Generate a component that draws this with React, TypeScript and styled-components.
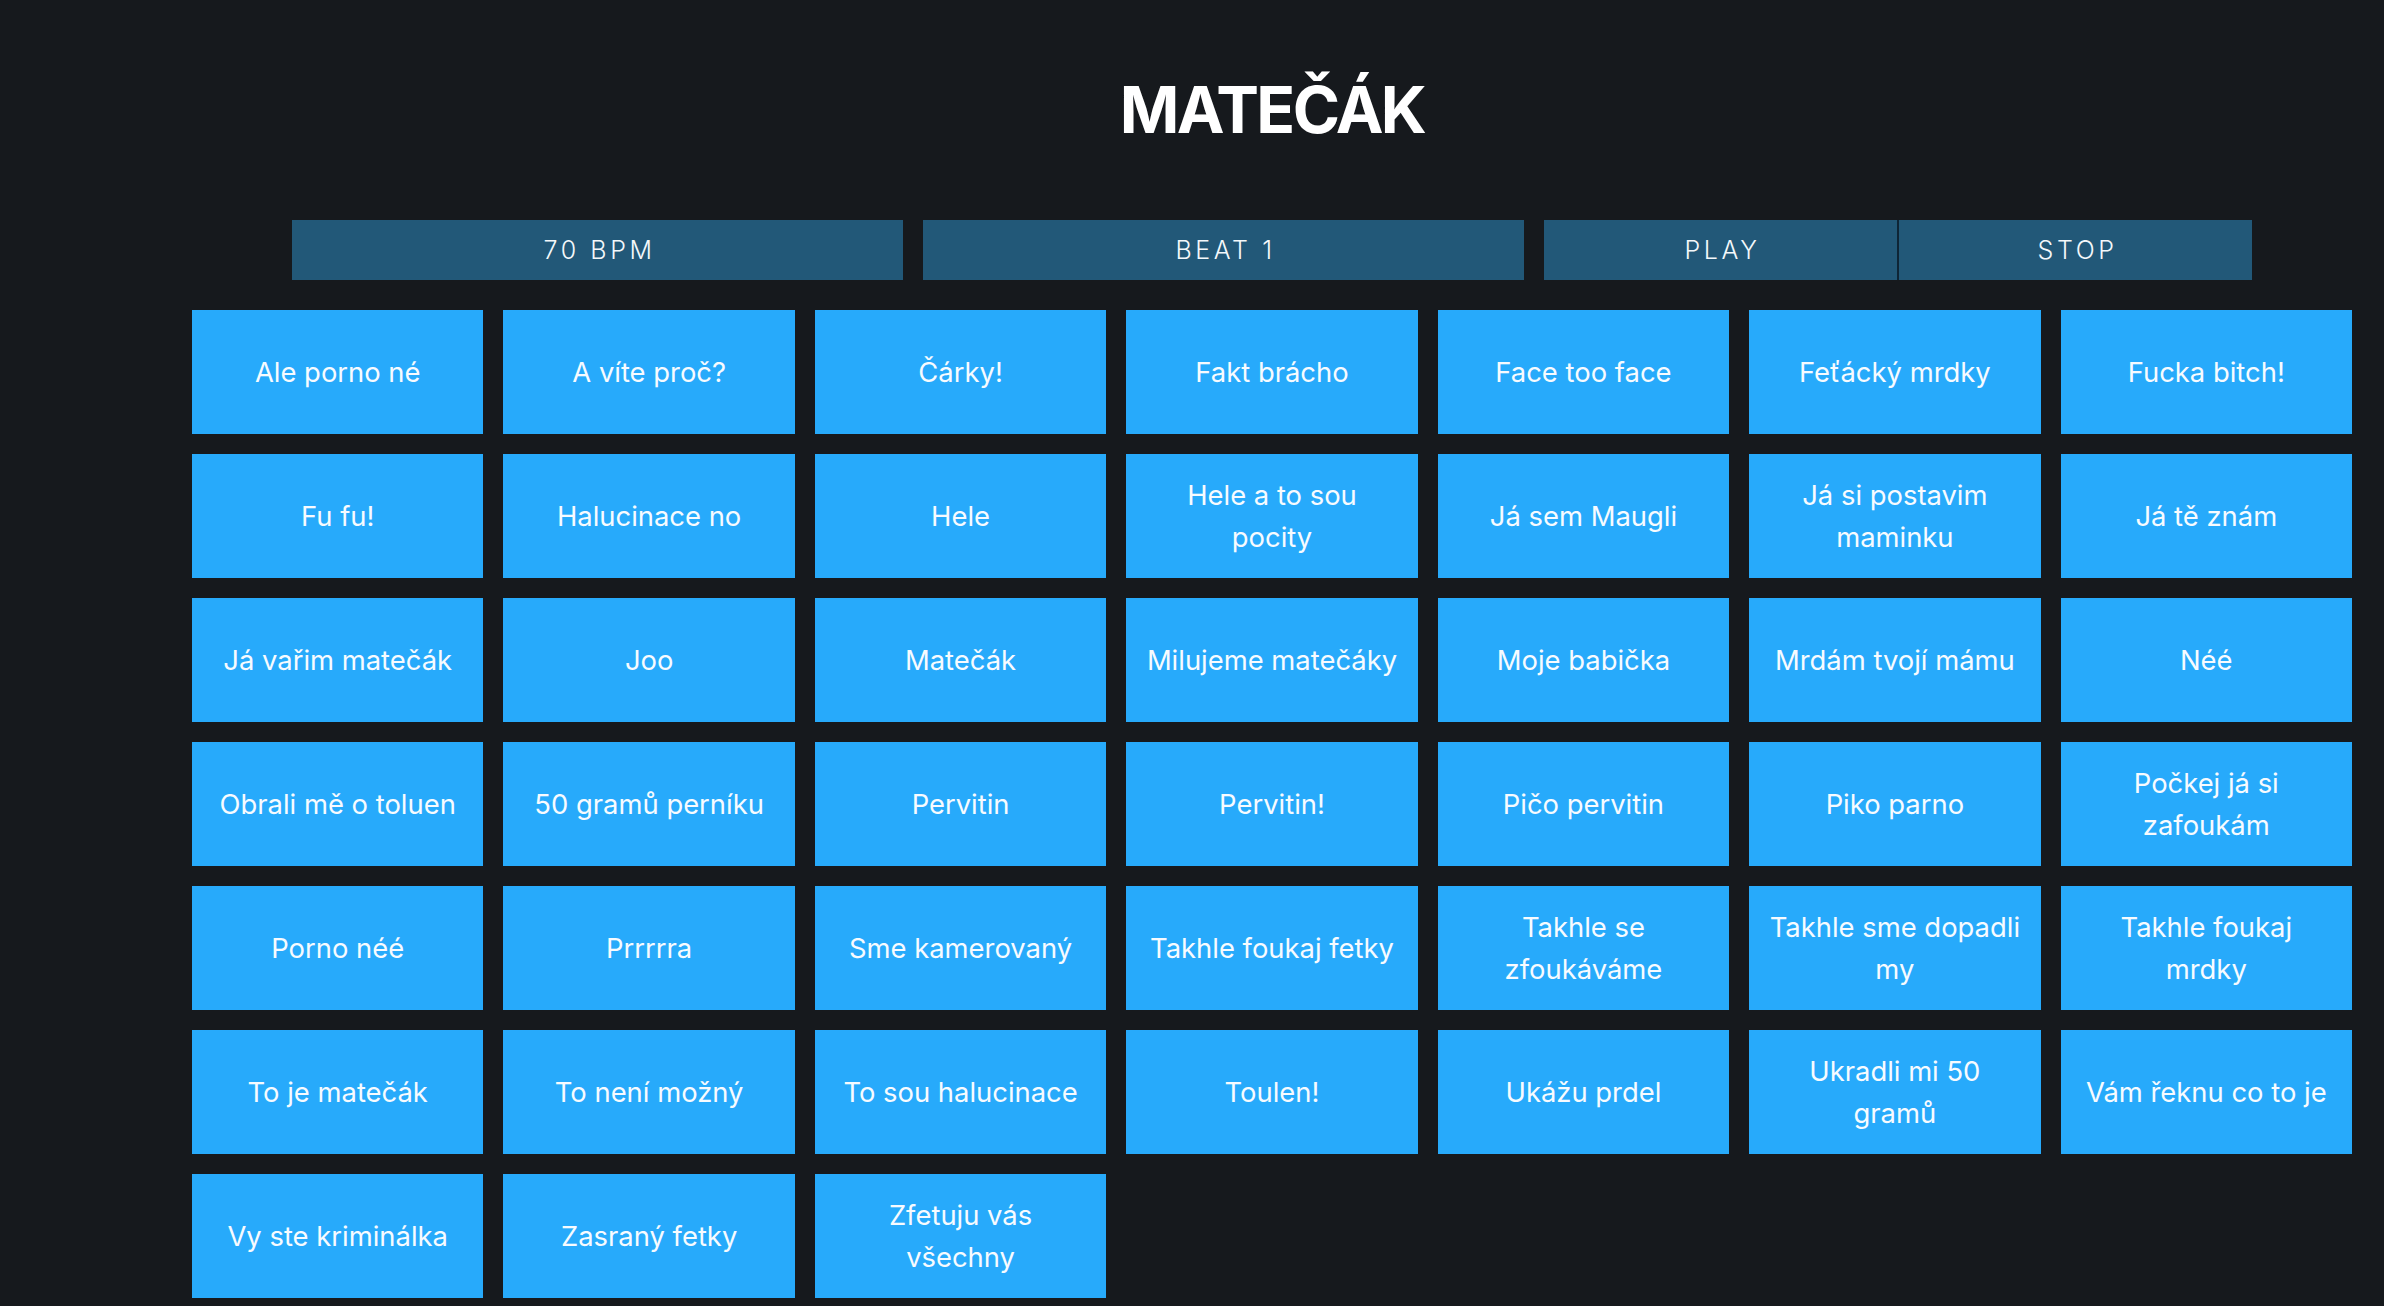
import React from "react";
import styled, { createGlobalStyle } from "styled-components";

const GlobalStyle = createGlobalStyle`
  html, body {
    margin: 0;
    padding: 0;
    background: #16191d;
  }
  body {
    font-family: Inter, "Noto Sans", "Liberation Sans", sans-serif;
    color: #ffffff;
  }
  * { box-sizing: border-box; }
`;

const Page = styled.main`
  padding: 72px 32px 40px 192px;
  min-height: 100vh;
`;

const Title = styled.h1`
  margin: 0;
  text-align: center;
  font-size: 64px;
  line-height: 1.2;
  font-weight: 700;
  letter-spacing: -2.6px;
  color: #ffffff;
`;

const Controls = styled.div`
  display: grid;
  grid-template-columns: 611fr 601fr 708fr;
  gap: 20px;
  margin: 71px 100px 30px;
  height: 60px;
`;

const ControlGroup = styled.div`
  display: grid;
  grid-template-columns: 1fr 1fr;
  gap: 2px;
  background: #0e2536;
`;

const ControlButton = styled.button`
  border: none;
  margin: 0;
  padding: 0 0 0 4px;
  background: #225878;
  color: #f4f8fb;
  font-family: Inter, "Noto Sans", "Liberation Sans", sans-serif;
  font-size: 25px;
  font-weight: 300;
  letter-spacing: 3.6px;
  text-transform: uppercase;
  cursor: pointer;
`;

const Board = styled.div`
  display: grid;
  grid-template-columns: repeat(7, 1fr);
  grid-auto-rows: 124px;
  gap: 20px;
`;

const Sample = styled.button`
  display: flex;
  align-items: center;
  justify-content: center;
  border: none;
  margin: 0;
  padding: 0 20px;
  background: #27aafb;
  color: #f7fbff;
  font-family: Inter, "Noto Sans", "Liberation Sans", sans-serif;
  font-size: 27.4px;
  font-weight: 400;
  line-height: 42px;
  text-align: center;
  cursor: pointer;
`;

const samples = [
  "Ale porno né",
  "A víte proč?",
  "Čárky!",
  "Fakt brácho",
  "Face too face",
  "Feťácký mrdky",
  "Fucka bitch!",
  "Fu fu!",
  "Halucinace no",
  "Hele",
  "Hele a to sou pocity",
  "Já sem Maugli",
  "Já si postavim maminku",
  "Já tě znám",
  "Já vařim matečák",
  "Joo",
  "Matečák",
  "Milujeme matečáky",
  "Moje babička",
  "Mrdám tvojí mámu",
  "Néé",
  "Obrali mě o toluen",
  "50 gramů perníku",
  "Pervitin",
  "Pervitin!",
  "Pičo pervitin",
  "Piko parno",
  "Počkej já si zafoukám",
  "Porno néé",
  "Prrrrra",
  "Sme kamerovaný",
  "Takhle foukaj fetky",
  "Takhle se zfoukáváme",
  "Takhle sme dopadli my",
  "Takhle foukaj mrdky",
  "To je matečák",
  "To není možný",
  "To sou halucinace",
  "Toulen!",
  "Ukážu prdel",
  "Ukradli mi 50 gramů",
  "Vám řeknu co to je",
  "Vy ste kriminálka",
  "Zasraný fetky",
  "Zfetuju vás všechny",
];

export default function App() {
  return (
    <>
      <GlobalStyle />
      <Page>
        <Title>MATEČÁK</Title>
        <Controls>
          <ControlButton>70 BPM</ControlButton>
          <ControlButton>Beat 1</ControlButton>
          <ControlGroup>
            <ControlButton>Play</ControlButton>
            <ControlButton>Stop</ControlButton>
          </ControlGroup>
        </Controls>
        <Board>
          {samples.map((s) => (
            <Sample key={s}>{s}</Sample>
          ))}
        </Board>
      </Page>
    </>
  );
}
